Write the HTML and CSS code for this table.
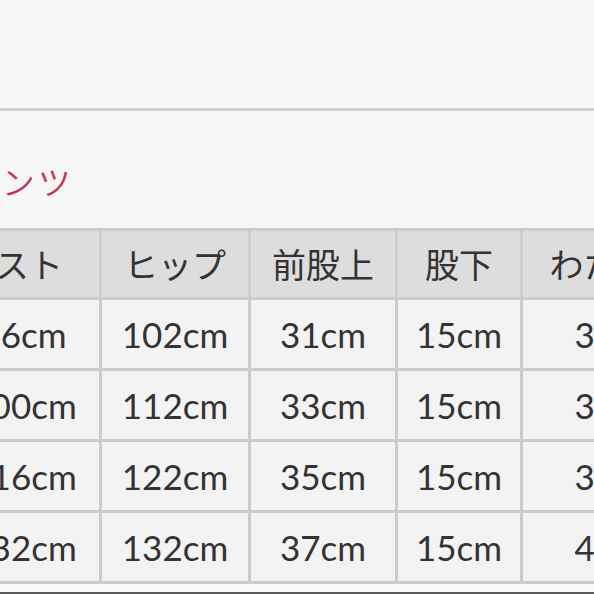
FILE: index.html
```html
<!DOCTYPE html>
<html lang="ja">
<head>
<meta charset="utf-8">
<title>サイズ表</title>
<link rel="stylesheet" href="styles.css">
</head>
<body>
<div class="page">
  <div class="topbar"></div>
  <h2 class="title">パンツ</h2>
  <table class="size-table">
    <thead>
      <tr>
        <th class="c1 head-first">ウエスト</th>
        <th class="c2">ヒップ</th>
        <th class="c3">前股上</th>
        <th class="c4">股下</th>
        <th class="c5">わたり幅</th>
      </tr>
    </thead>
    <tbody>
      <tr><td>86cm</td><td>102cm</td><td>31cm</td><td>15cm</td><td>31cm</td></tr>
      <tr><td>100cm</td><td>112cm</td><td>33cm</td><td>15cm</td><td>35cm</td></tr>
      <tr><td>116cm</td><td>122cm</td><td>35cm</td><td>15cm</td><td>39cm</td></tr>
      <tr><td>132cm</td><td>132cm</td><td>37cm</td><td>15cm</td><td>43cm</td></tr>
    </tbody>
  </table>
  <div class="bottom-gap"></div>
  <div class="bottom-bar"></div>
</div>
</body>
</html>
```

FILE: styles.css
```css
html, body {
  margin: 0;
  padding: 0;
  background: #f6f6f6;
  overflow: hidden;
}

.page {
  width: 594px;
  height: 594px;
  overflow: hidden;
  font-family: Lato, "Noto Sans CJK JP", sans-serif;
  color: #333333;
}

.topbar {
  height: 108px;
  border-bottom: 3px solid #cfcfcf;
  background: #f6f6f6;
}

.title {
  margin: 45px 0 0 -36px;
  font-family: "Noto Sans CJK JP", sans-serif;
  font-weight: 350;
  font-size: 33px;
  line-height: 50px;
  letter-spacing: 3px;
  color: #c2365f;
  white-space: nowrap;
}

.size-table {
  margin: 22px 0 0 -52px;
  border-collapse: separate;
  border-spacing: 0;
  table-layout: fixed;
  width: 767px;
  border-top: 3px solid #cccccc;
}

.size-table th,
.size-table td {
  box-sizing: border-box;
  padding: 0;
  border-right: 3px solid #cccccc;
  border-bottom: 3px solid #cccccc;
  text-align: center;
  white-space: nowrap;
  overflow: hidden;
}

.size-table th {
  background: #dddddd;
  font-family: "Noto Sans CJK JP", sans-serif;
  font-weight: 400;
  font-size: 34px;
  line-height: 66px;
  color: #333333;
}

.size-table td {
  background: #f3f3f3;
  font-size: 35px;
  line-height: 68px;
}

.size-table .c1 { width: 154px; }
.size-table .c2 { width: 149px; }
.size-table .c3 { width: 147px; }
.size-table .c4 { width: 125px; }
.size-table .c5 { width: 192px; }

.size-table .head-first {
  text-align: left;
  text-indent: -21px;
}

.bottom-gap {
  height: 8px;
  background: #fafafa;
}

.bottom-bar {
  height: 4px;
  background: #5a5a5a;
}
```
